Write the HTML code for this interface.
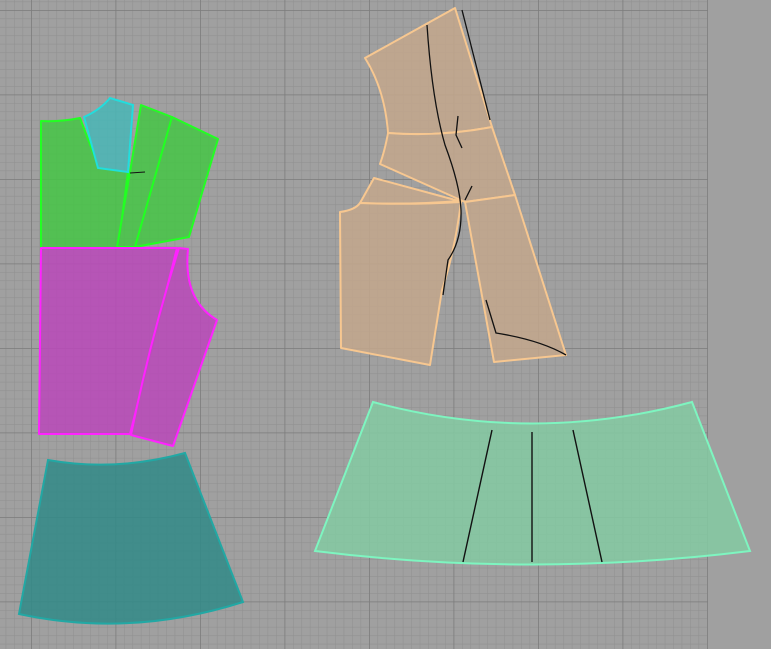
<!DOCTYPE html>
<html><head><style>
html,body{margin:0;padding:0;background:#a0a0a0;width:771px;height:649px;overflow:hidden}
svg{display:block}
</style></head><body>
<svg width="771" height="649" viewBox="0 0 771 649" xmlns="http://www.w3.org/2000/svg">
<defs>
<pattern id="minor" x="31" y="10" width="8.45" height="8.45" patternUnits="userSpaceOnUse">
<path d="M0 0H8.45M0 0V8.45" stroke="#919191" stroke-width="1.2" fill="none"/>
</pattern>
<pattern id="major" x="31" y="10" width="84.5" height="84.5" patternUnits="userSpaceOnUse">
<path d="M0 0H84.5M0 0V84.5" stroke="#7c7c7c" stroke-width="1.6" fill="none"/>
</pattern>
</defs>
<rect x="0" y="0" width="707" height="649" fill="url(#minor)"/>
<rect x="0" y="0" width="708" height="649" fill="url(#major)"/>
<rect x="708" y="0" width="63" height="649" fill="#a0a0a0"/>

<g fill-opacity="0.88">
<g fill="#48c448" stroke="#22ff22" stroke-width="2" stroke-linejoin="round">
<path d="M41 121 Q60 122 80 118 L99 168 L128 172 L118 248 L41 248 Z"/>
<path d="M141 105 L172 117 L135 247 L117 247 L130 172 Z"/>
<path d="M172 117 L218 139 L189 237 L135 247 Z"/>
</g>
<path d="M84 117 Q100 110 110 98 L133 105 L128 172 L98 168 Z" fill="#4bb5b5" stroke="#22dddd" stroke-width="2"/>

<g fill="#b84ab8" stroke="#ff22ff" stroke-width="2" stroke-linejoin="round">
<path d="M41 248 L177 248 L130 434 L39 434 Z"/>
<path d="M179 248 L188 249 Q183 300 217 320 L173 446 L131 435 Q150 340 179 248 Z"/>
</g>

<path d="M48 460 Q115 472 185 453 L243 602 Q130 638 19 614 Z" fill="#338a88" stroke="#22a8a4" stroke-width="2"/>

<g fill="#c2a68c" stroke="#f7c790" stroke-width="2" stroke-linejoin="round">
<path d="M365 58 L455 8 L492 127 Q440 137 388 133 Q385 90 365 58 Z"/>
<path d="M388 133 Q440 137 492 127 L515 195 L465 202 L380 164 Q385 150 388 133 Z"/>
<path d="M374 178 L459 201 Q410 205 360 203 Z"/>
<path d="M340 212 Q355 210 360 203 Q410 205 461 202 Q455 250 442 290 L430 365 L341 348 Z"/>
<path d="M465 202 L515 195 L566 355 L494 362 Z"/>
</g>

<path d="M373 402 Q532 445 692 402 L750 551 Q532 578 315 551 Z" fill="#84c8a2" stroke="#7ef5c0" stroke-width="2"/>
</g>

<path d="M130 173 L145 172" stroke="#111" stroke-width="1"/>
<g fill="none" stroke="#111" stroke-width="1.3">
<path d="M427 25 Q432 100 445 145 Q460 185 461 210 Q462 240 448 260 L443 295"/>
<path d="M462 10 L490 120"/>
<path d="M458 116 L456 135 L462 148"/>
<path d="M472 186 L465 200"/>
<path d="M486 300 L496 333 Q540 340 566 355"/>
</g>
<g stroke="#111" stroke-width="1.4">
<path d="M492 430 L463 562"/>
<path d="M532 432 L532 562"/>
<path d="M573 430 L602 562"/>
</g>
</svg>
</body></html>
